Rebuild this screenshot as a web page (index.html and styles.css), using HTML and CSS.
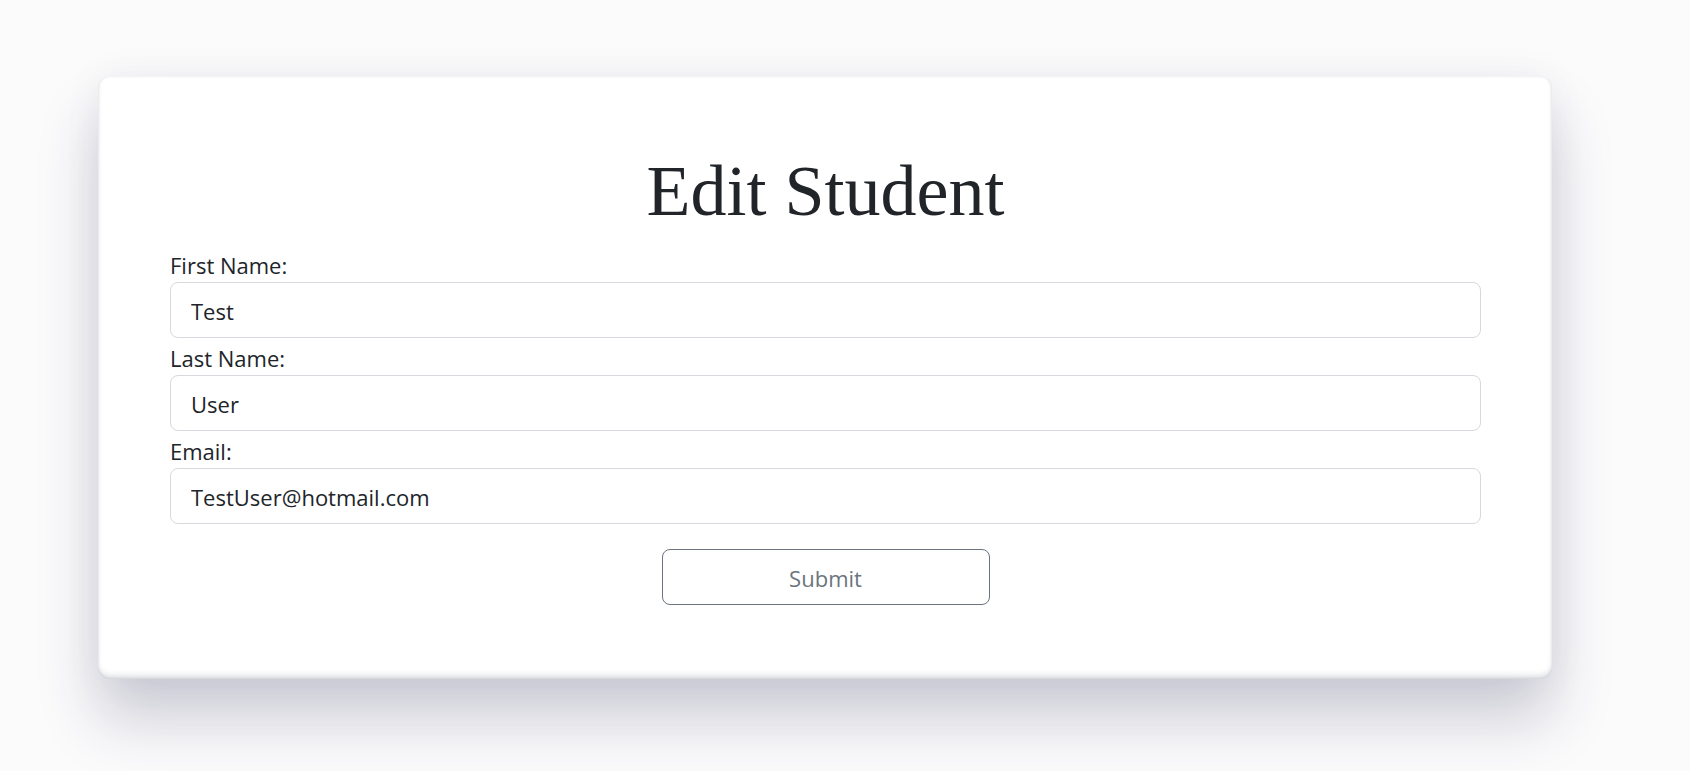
FILE: index.html
```html
<!DOCTYPE html>
<html lang="en">
<head>
<meta charset="utf-8">
<title>Edit Student</title>
<link rel="stylesheet" href="styles.css">
</head>
<body>
<main class="page">
  <section class="card">
    <h1 class="title">Edit Student</h1>
    <form class="form">
      <label class="label" for="first">First Name:</label>
      <input class="field" id="first" type="text" value="Test">
      <label class="label" for="last">Last Name:</label>
      <input class="field" id="last" type="text" value="User">
      <label class="label" for="email">Email:</label>
      <input class="field" id="email" type="email" value="TestUser@hotmail.com">
      <div class="actions">
        <button class="submit" type="button">Submit</button>
      </div>
    </form>
  </section>
</main>
</body>
</html>
```

FILE: styles.css
```css
html, body {
  margin: 0;
  padding: 0;
  background: #fbfbfc;
  height: 100%;
  overflow: hidden;
}

.page {
  padding: 76px 0 0 98px;
}

.card {
  box-sizing: border-box;
  width: 1454px;
  padding: 72px 71px 74px 72px;
  background: #ffffff;
  border-radius: 12px;
  box-shadow:
    inset 0 -5px 6px -2px rgba(60, 70, 90, 0.2),
    inset 0 0 3px rgba(60, 70, 90, 0.16),
    0 40px 60px rgba(40, 40, 80, 0.22),
    0 0 40px rgba(40, 40, 80, 0.05);
}

.title {
  margin: 0 0 11px;
  font-family: "Liberation Serif", "Times New Roman", serif;
  font-weight: normal;
  font-size: 72px;
  line-height: 1.2;
  color: #212529;
  text-align: center;
}

.form {
  display: flex;
  flex-direction: column;
}

.label {
  display: block;
  padding-top: 3px;
  font-family: "Open Sans", "Noto Sans", sans-serif;
  font-size: 22px;
  line-height: 34px;
  color: #212529;
}

.field {
  box-sizing: border-box;
  height: 56px;
  width: 100%;
  margin: 0;
  padding: 2px 20px 0;
  font-family: "Open Sans", "Noto Sans", sans-serif;
  font-size: 22px;
  color: #212529;
  background: #ffffff;
  border: 1px solid #d6d9dd;
  border-radius: 8px;
  outline: none;
}

.actions {
  display: flex;
  justify-content: center;
  margin-top: 25px;
}

.submit {
  box-sizing: border-box;
  width: 328px;
  height: 56px;
  padding-top: 2px;
  font-family: "Open Sans", "Noto Sans", sans-serif;
  font-size: 22px;
  color: #6c757d;
  background: transparent;
  border: 1px solid #6c757d;
  border-radius: 8px;
  cursor: pointer;
}
```
